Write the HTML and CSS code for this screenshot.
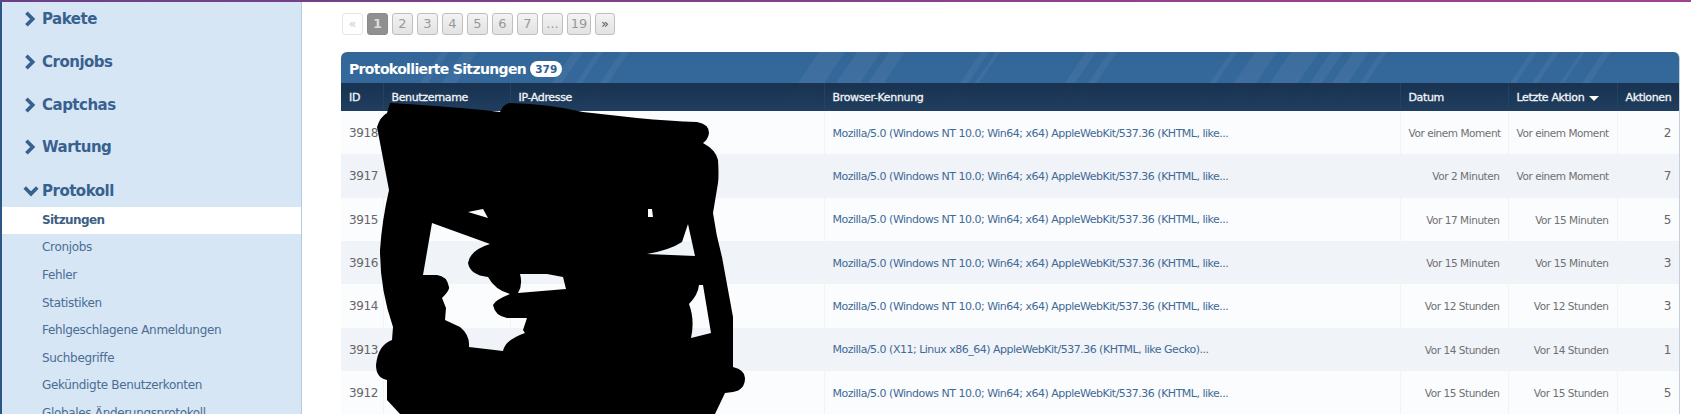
FILE: index.html
```html
<!DOCTYPE html>
<html lang="de">
<head>
  <meta charset="UTF-8">
  <title>Protokollierte Sitzungen</title>
  <link rel="stylesheet" href="styles.css">
</head>
<body>
  <div class="topline"></div>
  <div class="layout">
    <div class="sidebar">
      <a class="section"><svg class="chev" viewBox="0 0 14 14"><path d="M3 1.5l5.5 5.5-5.5 5.5"/></svg>Pakete</a>
      <a class="section"><svg class="chev" viewBox="0 0 14 14"><path d="M3 1.5l5.5 5.5-5.5 5.5"/></svg>Cronjobs</a>
      <a class="section"><svg class="chev" viewBox="0 0 14 14"><path d="M3 1.5l5.5 5.5-5.5 5.5"/></svg>Captchas</a>
      <a class="section"><svg class="chev" viewBox="0 0 14 14"><path d="M3 1.5l5.5 5.5-5.5 5.5"/></svg>Wartung</a>
      <a class="section open"><svg class="chev" viewBox="0 0 14 14"><path d="M1.5 4l5.5 5.5 5.5-5.5"/></svg>Protokoll</a>
      <a class="sub active">Sitzungen</a>
      <a class="sub">Cronjobs</a>
      <a class="sub">Fehler</a>
      <a class="sub">Statistiken</a>
      <a class="sub">Fehlgeschlagene Anmeldungen</a>
      <a class="sub">Suchbegriffe</a>
      <a class="sub">Gekündigte Benutzerkonten</a>
      <a class="sub">Globales Änderungsprotokoll</a>
    </div>

    <div class="main">
      <div class="pagination">
        <a class="page off">«</a>
        <a class="page current">1</a>
        <a class="page">2</a>
        <a class="page">3</a>
        <a class="page">4</a>
        <a class="page">5</a>
        <a class="page">6</a>
        <a class="page">7</a>
        <a class="page">...</a>
        <a class="page wide">19</a>
        <a class="page arrow">»</a>
      </div>

      <div class="panel">
        <svg class="stripes" viewBox="0 0 1338 59" preserveAspectRatio="none">
          <path d="M100 0h8l-40 59h-8zM122 0h14l-40 59h-14zM232 0h10l-40 59h-10zM256 0h6l-40 59h-6zM280 0h8l-40 59h-8z"/>
          <path d="M478 0h26l-40 59h-26zM516 0h24l-40 59h-24zM548 0h16l-40 59h-16zM640 0h8l-40 59h-8zM655 0h4l-40 59h-4zM745 0h10l-40 59h-10zM768 0h8l-40 59h-8z"/>
          <path d="M890 0h6l-40 59h-6zM914 0h22l-40 59h-22zM950 0h28l-40 59h-28zM990 0h12l-40 59h-12zM1012 0h16l-40 59h-16zM1040 0h6l-40 59h-6z"/>
          <path d="M1190 0h6l-40 59h-6zM1212 0h6l-40 59h-6zM1240 0h4l-40 59h-4zM1262 0h8l-40 59h-8z"/>
        </svg>
        <h2 class="panel-title">Protokollierte Sitzungen <span class="count">379</span></h2>
        <table class="sessions">
          <colgroup>
            <col class="c-id"><col class="c-user"><col class="c-ip"><col class="c-agent"><col class="c-date"><col class="c-last"><col class="c-act">
          </colgroup>
          <thead>
            <tr>
              <th>ID</th>
              <th>Benutzername</th>
              <th>IP-Adresse</th>
              <th>Browser-Kennung</th>
              <th>Datum</th>
              <th>Letzte Aktion <span class="caret"></span></th>
              <th>Aktionen</th>
            </tr>
          </thead>
          <tbody>
            <tr><td>3918</td><td></td><td></td><td><a>Mozilla/5.0 (Windows NT 10.0; Win64; x64) AppleWebKit/537.36 (KHTML, like...</a></td><td class="time">Vor einem Moment</td><td class="time">Vor einem Moment</td><td class="num">2</td></tr>
            <tr><td>3917</td><td></td><td></td><td><a>Mozilla/5.0 (Windows NT 10.0; Win64; x64) AppleWebKit/537.36 (KHTML, like...</a></td><td class="time">Vor 2 Minuten</td><td class="time">Vor einem Moment</td><td class="num">7</td></tr>
            <tr><td>3915</td><td></td><td></td><td><a>Mozilla/5.0 (Windows NT 10.0; Win64; x64) AppleWebKit/537.36 (KHTML, like...</a></td><td class="time">Vor 17 Minuten</td><td class="time">Vor 15 Minuten</td><td class="num">5</td></tr>
            <tr><td>3916</td><td></td><td></td><td><a>Mozilla/5.0 (Windows NT 10.0; Win64; x64) AppleWebKit/537.36 (KHTML, like...</a></td><td class="time">Vor 15 Minuten</td><td class="time">Vor 15 Minuten</td><td class="num">3</td></tr>
            <tr><td>3914</td><td></td><td></td><td><a>Mozilla/5.0 (Windows NT 10.0; Win64; x64) AppleWebKit/537.36 (KHTML, like...</a></td><td class="time">Vor 12 Stunden</td><td class="time">Vor 12 Stunden</td><td class="num">3</td></tr>
            <tr><td>3913</td><td></td><td></td><td><a>Mozilla/5.0 (X11; Linux x86_64) AppleWebKit/537.36 (KHTML, like Gecko)...</a></td><td class="time">Vor 14 Stunden</td><td class="time">Vor 14 Stunden</td><td class="num">1</td></tr>
            <tr><td>3912</td><td></td><td></td><td><a>Mozilla/5.0 (Windows NT 10.0; Win64; x64) AppleWebKit/537.36 (KHTML, like...</a></td><td class="time">Vor 15 Stunden</td><td class="time">Vor 15 Stunden</td><td class="num">5</td></tr>
          </tbody>
        </table>
      </div>
    </div>
  </div>

  <!-- black scribble painted over the user and IP columns -->
  <svg class="scribble" viewBox="0 0 1691 414">
    <path fill-rule="evenodd" d="M390 103Q440 106 483 110L500 112Q503 104 510 103Q550 104 583 112L637 118Q670 121 697 122Q709 124 709 133Q708 140 703 143Q716 150 718 160Q719 175 718 183L713 213Q716 235 722 257L733 317V367Q745 370 745 378Q745 390 733 392L725 393L715 414H400L387 400V380Q376 378 376 365Q378 345 392 340L393 327Q380 290 380 250Q382 220 389 190L377 127Q380 117 387 113Z
      M432 223L490 244Q470 250 468 263Q470 275 488 277Q495 290 510 294Q495 300 493 305Q495 316 507 318H527L523 330L525 333Q505 340 503 351L469 347Q470 335 460 327L445 320L446 308L442 298Q450 290 449 287Q447 276 437 275H423Z
      M520 274H547L563 277L566 289L518 293Q523 285 520 274Z
      M688 224L695 256L647 254Q670 250 682 242Z
      M699 285H703L711 333L691 338Q695 320 689 304Q698 295 699 285Z
      M468 212L483 209L488 218Z
      M648 209H652L653 217H648Z"/>
  </svg>
</body>
</html>
```

FILE: styles.css
```css
html, body {
  margin: 0;
  height: 414px;
  overflow: hidden;
  background-color: white;
  font-family: "DejaVu Sans", sans-serif;
}
.topline {
  height: 2px;
  background: linear-gradient(to right, #6b3f86, #a2418f);
}
.layout {
  display: flex;
  height: 412px;
}
.sidebar {
  flex: 0 0 299px;
  border-left: 2px solid #2c5686;
  border-right: 1px solid #b3cbe2;
  background-color: #d7e6f5;
  overflow: hidden;
}
.section {
  display: flex;
  align-items: center;
  height: 42.6px;
  padding-left: 21px;
  color: #37618f;
  font-size: 15px;
  font-weight: bold;
  letter-spacing: -0.5px;
}
.section:first-child {
  height: 34px;
}
.section.open {
  height: 37px;
  padding-top: 6px;
  box-sizing: border-box;
  margin-top: 1px;
}
.section:nth-child(2) {
  margin-top: 5px;
}
.chev {
  width: 16px;
  height: 16px;
  margin-right: 3px;
  flex: none;
}
.chev path {
  fill: none;
  stroke: #37618f;
  stroke-width: 3.2;
}
.sub {
  display: block;
  height: 27.6px;
  line-height: 26px;
  padding-left: 40px;
  color: #4a6d94;
  font-size: 12px;
  letter-spacing: -0.33px;
}
.sub.active {
  background-color: white;
  color: #3f5f85;
  font-weight: bold;
  letter-spacing: -0.6px;
}
.main {
  flex: 1;
  padding: 11px 12px 0 39px;
}
.pagination {
  display: flex;
  gap: 4px;
  height: 22px;
  margin: 0 0 17px 1px;
}
.page {
  width: 19px;
  height: 20px;
  border: 1px solid #bfbfbf;
  border-radius: 3px;
  background: linear-gradient(#f3f3f3, #e2e2e2);
  color: #999;
  font-size: 13px;
  line-height: 20px;
  text-align: center;
}
.page.wide {
  width: 22px;
}
.page.arrow {
  width: 18px;
  color: #555;
}
.page.off {
  background: white;
  border-color: #e4e4e4;
  color: #ccc;
}
.page.current {
  background: #909090;
  border-color: #8a8a8a;
  color: #dcdcdc;
  font-weight: bold;
}
.panel {
  position: relative;
  border-radius: 6px 6px 0 0;
  border-right: 1px solid #c4d0dc;
  background: linear-gradient(#336698 0, #366b9f 59px, white 59px);
  overflow: hidden;
}
.stripes {
  position: absolute;
  left: 0;
  top: 0;
  width: 1338px;
  height: 59px;
  fill: rgba(255,255,255,0.05);
}
.panel-title {
  position: relative;
  margin: 0;
  height: 31px;
  padding-left: 8px;
  color: white;
  font-size: 14px;
  line-height: 34px;
  letter-spacing: -0.65px;
}
.count {
  display: inline-block;
  padding: 0 5px;
  border-radius: 9px;
  background-color: white;
  color: #2f5f91;
  font-size: 10.5px;
  line-height: 16px;
  letter-spacing: 0;
  vertical-align: 1px;
}
.sessions {
  position: relative;
  width: 1338px;
  border-collapse: collapse;
  table-layout: fixed;
}
.c-id { width: 42px; }
.c-user { width: 127px; }
.c-ip { width: 314px; }
.c-agent { width: 576px; }
.c-date { width: 108px; }
.c-last { width: 109px; }
.c-act { width: 62px; }
.sessions th {
  height: 28px;
  padding: 0 0 0 8px;
  border-left: 1px solid rgba(40,70,105,0.7);
  background: linear-gradient(rgba(22,46,74,0.92), rgba(30,58,90,0.92));
  color: #f2f5f9;
  font-size: 11px;
  font-weight: normal;
  -webkit-text-stroke: 0.3px #f2f5f9;
  letter-spacing: -0.35px;
  text-align: left;
}
.sessions th:first-child,
.sessions td:first-child {
  border-left: none;
}
.caret {
  display: inline-block;
  margin-left: 2px;
  border-top: 5px solid white;
  border-left: 5px solid transparent;
  border-right: 5px solid transparent;
  vertical-align: 0;
}
.sessions td {
  height: 43.33px;
  padding: 1px 8px 0;
  box-sizing: border-box;
  border-left: 1px solid rgba(220,226,235,0.4);
  color: #666;
  font-size: 11px;
  letter-spacing: -0.5px;
  white-space: nowrap;
  overflow: hidden;
}
.sessions tbody tr:nth-child(odd) {
  background-color: #fbfcfe;
}
.sessions tbody tr:nth-child(even) {
  background-color: #f0f3f8;
}
.sessions td a {
  color: #3f6a96;
}
.sessions td:first-child {
  font-size: 12px;
  letter-spacing: -0.35px;
}
.sessions td.time {
  color: #707070;
  font-size: 10.5px;
  letter-spacing: -0.45px;
  text-align: right;
}
.sessions td.num {
  font-size: 12px;
  text-align: right;
}
.scribble {
  position: absolute;
  left: 0;
  top: 0;
  width: 1691px;
  height: 414px;
  fill: black;
}
```
